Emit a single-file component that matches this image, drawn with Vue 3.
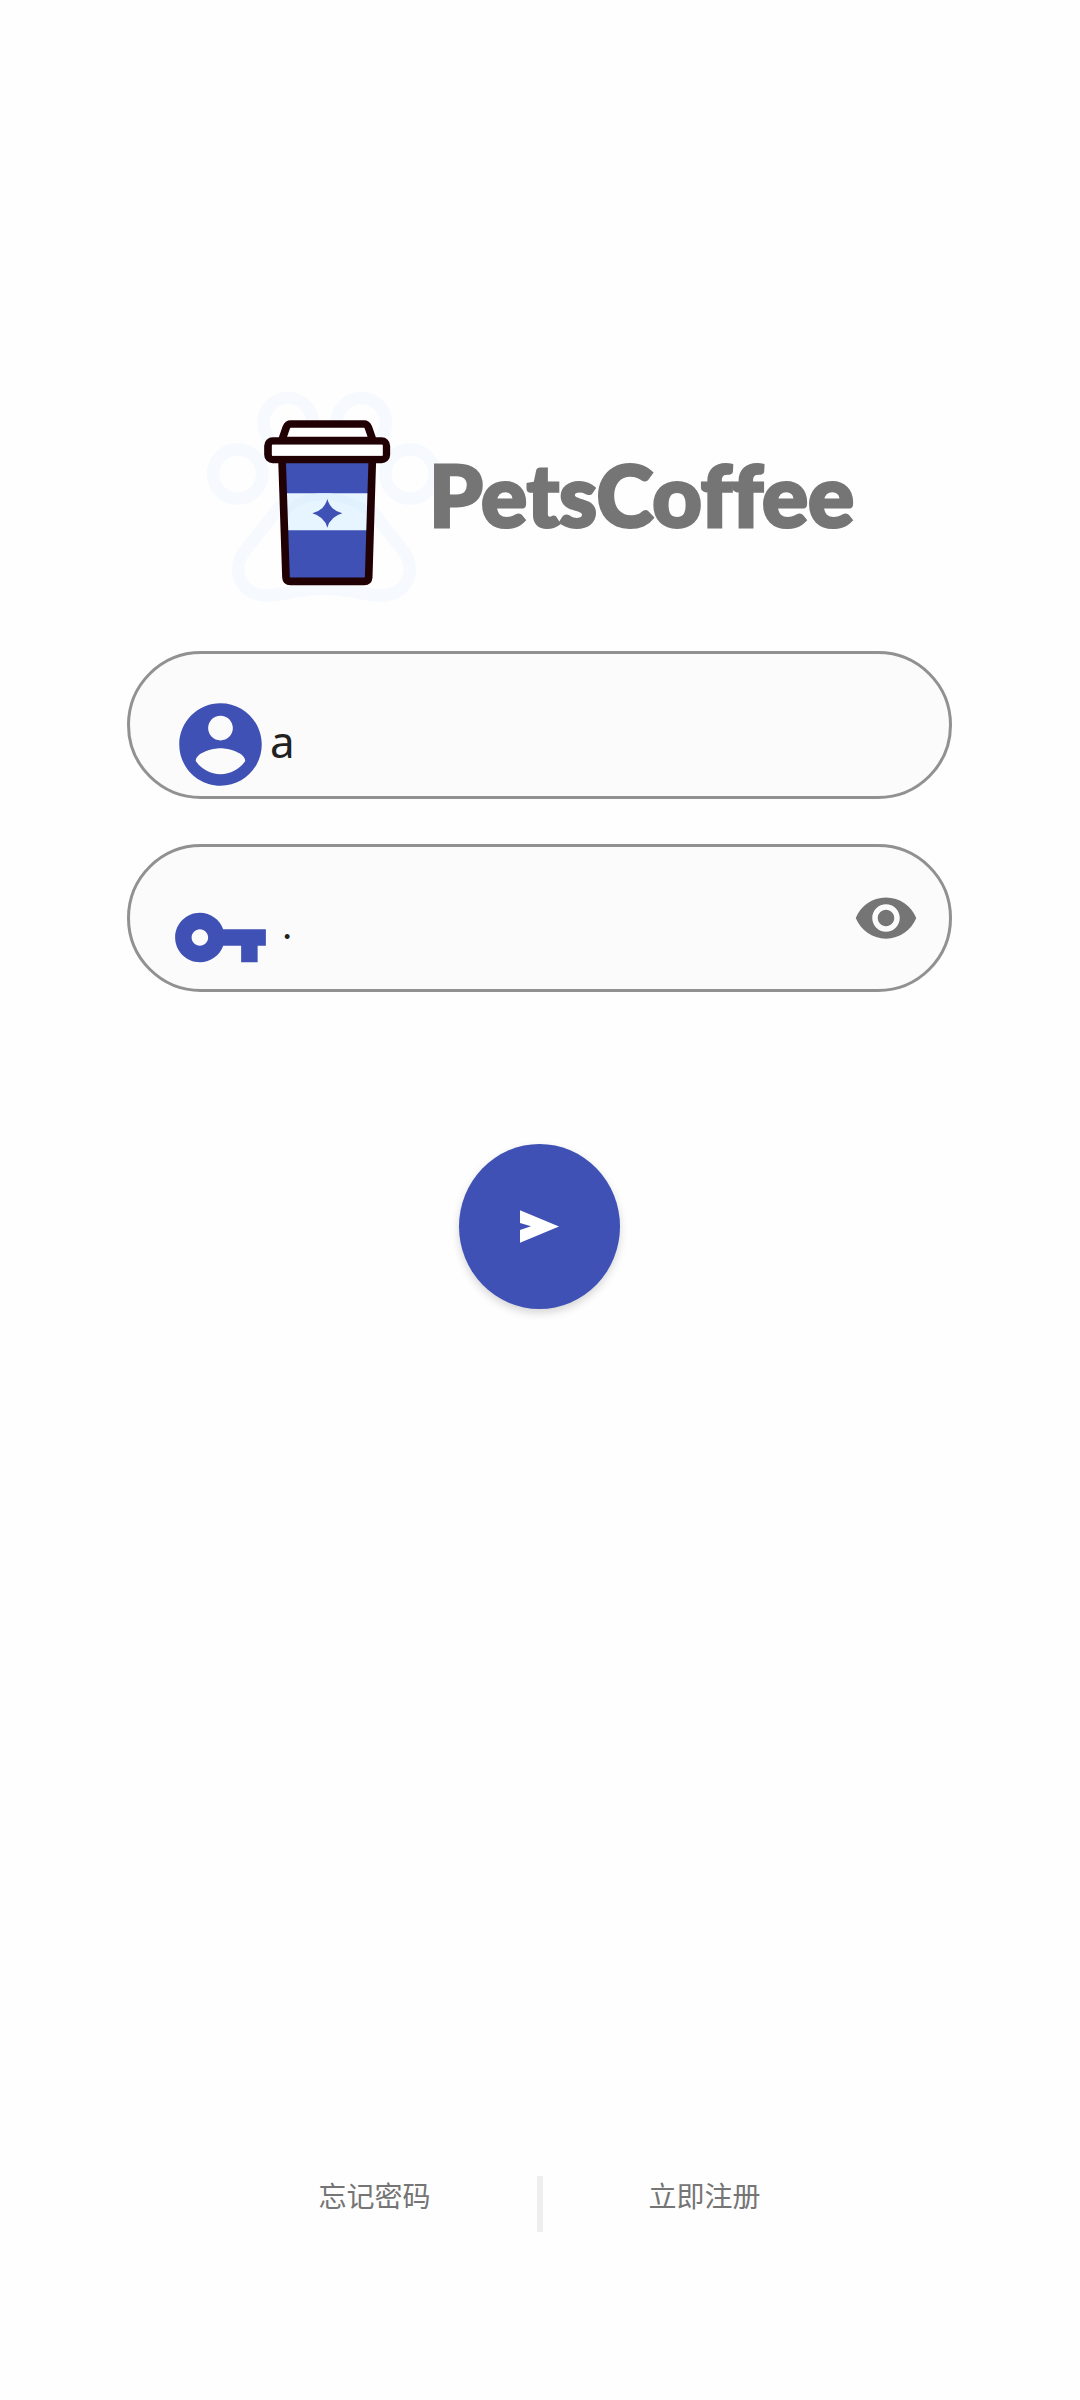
<script setup>
import { ref } from 'vue'

const account = ref('a')
const password = ref('1')
const visible = ref(false)
</script>

<template>
  <main class="page">
    <header class="brand">
      <svg class="logo" viewBox="42 60 708 645" aria-hidden="true">
        <g fill="none" stroke="#f6faff" stroke-width="38">
          <circle cx="294" cy="158" r="74" />
          <circle cx="514" cy="158" r="74" />
          <circle cx="143" cy="312" r="74" />
          <circle cx="660" cy="312" r="74" />
          <path d="M275 403L160 548C120 610 162 678 232 677C300 672 340 656 402 656C464 656 504 672 572 677C642 678 684 610 644 548L530 403" />
        </g>
        <path d="M277 268H546L535 633H289Z" fill="#3f51b5" />
        <path d="M280 370H544L540 481H284Z" fill="#e6f5ff" />
        <path d="M290 412Q320 370 402 370Q484 370 535 412V440Q470 390 402 390Q330 390 290 440Z" fill="#e1f1fd" />
        <path d="M412 387Q421 421 457 430Q421 440 412 473Q403 440 367 430Q403 421 412 387Z" fill="#3f51b5" />
        <g fill="none" stroke="#210003" stroke-width="23" stroke-linejoin="round">
          <path d="M276 268L288 622Q289 634 301 634H523Q535 634 536 622L547 268" />
          <path d="M275 212L289 172Q293 162 302 162H522Q531 162 535 172L549 212Z" fill="#fff" />
          <rect x="234" y="213" width="355" height="55" rx="14" fill="#fff" />
        </g>
        <path d="M246 224H578V257H246Z" fill="#fff" />
      </svg>
      <h1 class="name">PetsCoffee</h1>
    </header>

    <form class="form" @submit.prevent>
      <label class="field">
        <svg class="lead" viewBox="0 0 24 24" aria-hidden="true">
          <path fill="#3f51b5" d="M12 2C6.480 2 2 6.480 2 12s4.480 10 10 10 10-4.480 10-10S17.520 2 12 2zm0 3c1.660 0 3 1.340 3 3s-1.340 3-3 3-3-1.340-3-3 1.340-3 3-3zm0 14.200c-2.500 0-4.710-1.280-6-3.220.030-1.990 4-3.080 6-3.080 1.990 0 5.970 1.090 6 3.080-1.290 1.940-3.500 3.220-6 3.220z" />
        </svg>
        <input v-model="account" class="input" type="text" aria-label="账号" />
      </label>

      <div class="field">
        <svg class="lead" viewBox="0 0 24 24" aria-hidden="true">
          <path fill="#3f51b5" d="M12.650 10C11.830 7.670 9.610 6 7 6c-3.310 0-6 2.690-6 6s2.690 6 6 6c2.610 0 4.830-1.670 5.650-4H17v4h4v-4h2v-4H12.650zM7 14c-1.100 0-2-.900-2-2s.900-2 2-2 2 .900 2 2-.900 2-2 2z" />
        </svg>
        <input
          v-model="password"
          class="input"
          :class="{ masked: !visible }"
          :type="visible ? 'text' : 'password'"
          aria-label="密码"
        />
        <button class="eye" type="button" aria-label="显示密码" @click="visible = !visible">
          <svg viewBox="0 0 24 24" aria-hidden="true">
            <path fill="#757575" d="M12 4.500C7 4.500 2.730 7.610 1 12c1.730 4.390 6 7.500 11 7.500s9.270-3.110 11-7.500c-1.730-4.390-6-7.500-11-7.500zM12 17c-2.760 0-5-2.240-5-5s2.240-5 5-5 5 2.240 5 5-2.240 5-5 5zm0-8c-1.660 0-3 1.340-3 3s1.340 3 3 3 3-1.340 3-3-1.340-3-3-3z" />
          </svg>
        </button>
      </div>

      <button class="send" type="submit" aria-label="登录">
        <svg viewBox="270 272 117 97" aria-hidden="true">
          <path fill="#fff" d="M270 272L387 320.500L270 369V331L303 320L270 310Z" />
        </svg>
      </button>
    </form>

    <footer class="links">
      <a href="#forgot">忘记密码</a>
      <span class="divider"></span>
      <a href="#register">立即注册</a>
    </footer>
  </main>
</template>

<style>
body {
  background: #fefefe;
}
</style>

<style scoped>
.page {
  box-sizing: border-box;
  min-height: 100vh;
  padding: 390px 128px 168px 127px;
  display: flex;
  flex-direction: column;
  font-family: "Noto Sans", "Noto Sans CJK SC", sans-serif;
}

.brand {
  display: flex;
  align-items: center;
  padding-left: 77px;
}

.logo {
  flex: none;
  width: 236px;
  height: 215px;
}

.name {
  margin: 0 0 8px -11px;
  font-family: Lato, sans-serif;
  font-size: 86px;
  line-height: 100px;
  font-weight: 900;
  font-variant-ligatures: none;
  color: #757575;
  -webkit-text-stroke: 3px #757575;
}

.form {
  display: flex;
  flex-direction: column;
  gap: 45px;
  margin-top: 46px;
}

.field {
  box-sizing: border-box;
  display: flex;
  align-items: flex-start;
  height: 148px;
  padding: 41px 30px 0 41px;
  border: 3px solid #919191;
  border-radius: 74px;
  background: #fbfbfb;
}

.lead {
  flex: none;
  width: 99px;
  height: 99px;
}

.input {
  flex: 1;
  min-width: 0;
  height: 92px;
  padding: 0;
  border: 0;
  outline: 0;
  background: transparent;
  font-family: "Noto Sans", sans-serif;
  font-size: 44px;
  color: #212121;
}

.masked {
  height: 98px;
  padding-left: 14px;
  font-family: "Liberation Sans", sans-serif;
  font-size: 18px;
}

.eye {
  width: 66px;
  height: 66px;
  margin-top: -3px;
  padding: 0;
  border: 0;
  background: transparent;
}

.eye svg {
  display: block;
  width: 100%;
}

.send {
  display: flex;
  align-items: center;
  justify-content: center;
  align-self: center;
  width: 161px;
  height: 165px;
  margin-top: 107px;
  padding: 0;
  border: 0;
  border-radius: 50%;
  background: #3f51b5;
  box-shadow: 0 4px 8px rgba(0, 0, 0, 0.16);
}

.send svg {
  width: 39px;
  height: 33px;
}

.links {
  display: grid;
  grid-template-columns: 112px 6px 112px;
  justify-content: center;
  column-gap: 106px;
  margin-top: auto;
}

.links a {
  font-size: 28px;
  line-height: 40px;
  color: #757575;
  text-decoration: none;
}

.divider {
  height: 56px;
  background: #eee;
}
</style>
